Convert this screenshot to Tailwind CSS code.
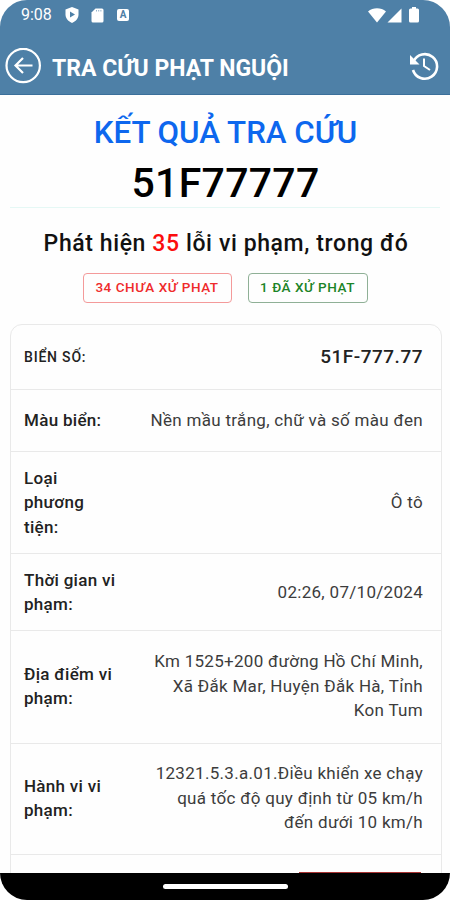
<!DOCTYPE html>
<html lang="vi">

<head>
    <meta charset="UTF-8">
    <meta name="viewport" content="width=device-width, initial-scale=1.0">
    <script src="https://cdn.jsdelivr.net/npm/@tailwindcss/browser@4"></script>
    <title>Tra cứu phạt nguội</title>
</head>

<body class="bg-white font-[Roboto,sans-serif]">
    <div class="w-[450px] h-[900px] flex flex-col overflow-hidden rounded-[27px] bg-[#fefefe]">
        <!-- Header -->
        <header class="h-[95px] shrink-0 flex flex-col bg-[#4e80a7] text-white border-b border-[#3b6f9a]">
            <div class="h-[30px] flex items-center pl-[21px] pr-[31px]">
                <span class="w-[31px] text-base leading-none whitespace-nowrap">9:08</span>
                <svg class="ml-[13px] w-[14px] h-[16px]" viewBox="0 0 14 16">
                    <path fill="currentColor" d="M7 0 L13.5 2.5 V7.5 C13.5 11.500 10.500 14.500 7 16 C3.500 14.500 .5 11.500 .5 7.500 V2.500 Z" />
                    <path fill="#4e80a7" d="M5 4.500 L10 7.500 L5 10.500 Z" />
                </svg>
                <svg class="ml-[12px] w-[13px] h-[15px]" viewBox="0 0 13 15">
                    <path fill="currentColor" d="M4.500 .5 H11 Q12.500 .5 12.500 2 V13 Q12.500 14.500 11 14.500 H2 Q.5 14.500 .5 13 V4.500 Z" />
                    <path stroke="#4e80a7" stroke-width=".6" d="M5.500 2 V3.500 M7.700 2 V3.500 M9.900 2 V3.500" />
                </svg>
                <span class="ml-[13px] size-[12px] rounded-[2px] bg-white text-[#4e80a7] text-[10px] font-bold leading-[12px] text-center">A</span>
                <svg class="ml-auto w-[18px] h-[15px]" viewBox="0 0 18 15">
                    <path fill="currentColor" d="M0 3.500 C5 -.7 13 -.7 18 3.500 L9 14.500 Z" />
                </svg>
                <svg class="ml-px w-[15px] h-[15px]" viewBox="0 0 15 15">
                    <path fill="currentColor" d="M14.500 .5 V14.500 H.5 Z" />
                </svg>
                <svg class="ml-[7px] w-[10px] h-[16px]" viewBox="0 0 10 16">
                    <path fill="currentColor" d="M3 0 H7 V1.500 H8.500 Q10 1.500 10 3 V14 Q10 15.500 8.500 15.500 H1.500 Q0 15.500 0 14 V3 Q0 1.500 1.500 1.500 H3 Z" />
                </svg>
            </div>
            <div class="flex-1 flex items-center pl-[5px] pr-[11px] pt-[7px]">
                <svg class="size-[36px] shrink-0" viewBox="0 0 36 36" fill="none" stroke="currentColor" stroke-width="2.200">
                    <circle cx="18.200" cy="17.500" r="16.700" />
                    <path d="M27.500 17.500 H10.500 M18 10 L10.500 17.500 L18 25" />
                </svg>
                <h1 class="ml-[11px] mt-[5px] text-[23px] font-bold leading-none whitespace-nowrap">TRA CỨU PHẠT NGUỘI</h1>
                <svg class="ml-auto size-[30px]" viewBox="0 0 30 30" fill="none" stroke="currentColor" stroke-width="2.600">
                    <path d="M4.500 10.500 A12.300 12.300 0 1 1 4 19" />
                    <path fill="currentColor" stroke="none" d="M1 4 V13.500 H10.500 Z" />
                    <path stroke-width="2" d="M15 7.500 V15 L21 19" />
                </svg>
            </div>
        </header>

        <!-- Result summary -->
        <main class="flex-1 min-h-0 overflow-hidden px-[10px]">
            <section class="h-[229px] flex flex-col items-center whitespace-nowrap">
                <h2 class="mt-[20px] pl-px text-[31.3px] leading-[36px] font-medium text-[#0d67ee]">KẾT QUẢ TRA CỨU</h2>
                <p class="mt-[8px] pl-px text-[41px] leading-[48px] font-medium text-black tracking-[0.3px]">51F77777</p>
                <div class="w-full h-px bg-[#e5f8f5]"></div>
                <p class="mt-[22px] pl-[2px] text-[23px] leading-[28px] font-medium text-[#111111] tracking-[0.6px]">Phát hiện <span class="text-[#fb0d0d]">35</span> lỗi vi phạm, trong đó</p>
                <div class="mt-[15px] flex gap-4">
                    <span class="w-[149px] h-[30px] border border-[#f49a9a] rounded-[4px] text-center text-[13.5px] leading-[27px] font-medium tracking-[0.55px] text-[#ef2b2b]">34 CHƯA XỬ PHẠT</span>
                    <span class="w-[120px] h-[30px] border border-[#8fb096] rounded-[4px] text-center text-[13.5px] leading-[27px] font-medium tracking-[0.55px] text-[#1c8427]">1 ĐÃ XỬ PHẠT</span>
                </div>
            </section>

            <!-- Violation details -->
            <dl class="w-[432px] h-[600px] border border-[#e9e9e9] rounded-t-[12px] divide-y divide-[#e9e9e9] text-[17px] leading-[24.5px] tracking-[0.3px] text-[#3c3c3c] whitespace-nowrap">
                <div class="h-[65px] flex items-center justify-between pl-[13px] pr-[18px]">
                    <dt class="text-[14px] font-medium tracking-[0.8px] text-[#222222]">BIỂN SỐ:</dt>
                    <dd class="text-[19px] font-medium tracking-[0.5px] text-[#222222]">51F-777.77</dd>
                </div>
                <div class="h-[62px] flex items-center justify-between pl-[13px] pr-[18px]">
                    <dt class="font-medium text-[#222222]">Màu biển:</dt>
                    <dd>Nền mầu trắng, chữ và số màu đen</dd>
                </div>
                <div class="h-[102px] flex items-center justify-between pl-[13px] pr-[18px]">
                    <dt class="font-medium text-[#222222]">Loại<br>phương<br>tiện:</dt>
                    <dd>Ô tô</dd>
                </div>
                <div class="h-[77px] flex items-center justify-between pl-[13px] pr-[18px]">
                    <dt class="font-medium text-[#222222]">Thời gian vi<br>phạm:</dt>
                    <dd>02:26, 07/10/2024</dd>
                </div>
                <div class="h-[113px] flex items-center justify-between pl-[13px] pr-[18px] pb-0.5">
                    <dt class="font-medium text-[#222222]">Địa điểm vi<br>phạm:</dt>
                    <dd class="text-right">Km 1525+200 đường Hồ Chí Minh,<br>Xã Đắk Mar, Huyện Đắk Hà, Tỉnh<br>Kon Tum</dd>
                </div>
                <div class="h-[111px] flex items-center justify-between pl-[13px] pr-[18px] pb-0.5">
                    <dt class="font-medium text-[#222222]">Hành vi vi<br>phạm:</dt>
                    <dd class="text-right">12321.5.3.a.01.Điều khiển xe chạy<br>quá tốc độ quy định từ 05 km/h<br>đến dưới 10 km/h</dd>
                </div>
                <div class="flex justify-end pt-[17px] pr-[20px]">
                    <div class="w-[122px] h-[30px] bg-[#a83232]"></div>
                </div>
            </dl>
        </main>

        <!-- Navigation bar -->
        <footer class="h-[27px] shrink-0 bg-black flex justify-center pt-[11px]">
            <div class="w-[125px] h-[5px] rounded-full bg-white"></div>
        </footer>
    </div>
</body>

</html>
